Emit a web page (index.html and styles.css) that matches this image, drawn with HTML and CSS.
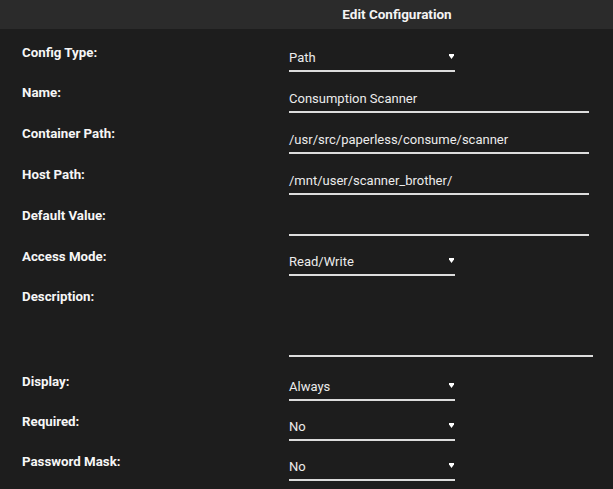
FILE: index.html
```html
<!DOCTYPE html>
<html lang="en">

<head>
    <meta charset="utf-8">
    <meta name="viewport" content="width=device-width, initial-scale=1.0">
    <title>Edit Configuration</title>
    <link rel="stylesheet" href="styles.css">
</head>

<body>
    <div class="titel">Edit Configuration</div>

    <div class="form">
        <div class="raekke valg">
            <div class="label">Config Type:</div>
            <div class="felt kort">Path<svg class="pil" width="5" height="5" viewBox="0 0 5 5"><polygon points="0,0 5,0 5,1.6 2.5,5 0,1.6" fill="#fff"/></svg></div>
        </div>
        <div class="raekke">
            <div class="label">Name:</div>
            <div class="felt lang">Consumption Scanner</div>
        </div>
        <div class="raekke">
            <div class="label">Container Path:</div>
            <div class="felt lang">/usr/src/paperless/consume/scanner</div>
        </div>
        <div class="raekke">
            <div class="label">Host Path:</div>
            <div class="felt lang">/mnt/user/scanner_brother/</div>
        </div>
        <div class="raekke">
            <div class="label">Default Value:</div>
            <div class="felt lang"></div>
        </div>
        <div class="raekke valg">
            <div class="label">Access Mode:</div>
            <div class="felt kort">Read/Write<svg class="pil" width="5" height="5" viewBox="0 0 5 5"><polygon points="0,0 5,0 5,1.6 2.5,5 0,1.6" fill="#fff"/></svg></div>
        </div>
        <div class="raekke beskrivelse">
            <div class="label">Description:</div>
            <div class="felt tekstfelt"></div>
        </div>
        <div class="raekke valg efter">
            <div class="label">Display:</div>
            <div class="felt kort">Always<svg class="pil" width="5" height="5" viewBox="0 0 5 5"><polygon points="0,0 5,0 5,1.6 2.5,5 0,1.6" fill="#fff"/></svg></div>
        </div>
        <div class="raekke valg">
            <div class="label">Required:</div>
            <div class="felt kort">No<svg class="pil" width="5" height="5" viewBox="0 0 5 5"><polygon points="0,0 5,0 5,1.6 2.5,5 0,1.6" fill="#fff"/></svg></div>
        </div>
        <div class="raekke valg">
            <div class="label">Password Mask:</div>
            <div class="felt kort">No<svg class="pil" width="5" height="5" viewBox="0 0 5 5"><polygon points="0,0 5,0 5,1.6 2.5,5 0,1.6" fill="#fff"/></svg></div>
        </div>
    </div>
</body>

</html>
```

FILE: styles.css
```css
body {
    margin: 0;
    background-color: #1d1d1d;
    color: #ececec;
    font-family: Roboto, "Liberation Sans", sans-serif;
    font-size: 13px;
}

.titel {
    height: 29px;
    line-height: 29px;
    background-color: #2b2b2b;
    padding-left: 181px;
    text-align: center;
    font-weight: bold;
    font-size: 13.5px;
    color: #f4f4f4;
}

.form {
    padding-top: 3px;
}

.raekke {
    display: flex;
    align-items: flex-end;
    height: 41px;
}

.valg {
    height: 40px;
}

.beskrivelse {
    height: 81px;
}

.efter {
    margin-top: 4px;
}

.label {
    box-sizing: border-box;
    flex: 0 0 289px;
    align-self: flex-start;
    padding-left: 22px;
    padding-top: 13px;
    line-height: 16px;
    font-weight: bold;
    font-size: 13.3px;
    color: #f6f6f6;
}

.felt {
    box-sizing: border-box;
    line-height: 16px;
    padding-bottom: 4px;
    border-bottom: 2px solid #dcdcdc;
    min-height: 22px;
}

.kort {
    width: 166px;
    display: flex;
    justify-content: space-between;
    align-items: center;
}

.lang {
    width: 300px;
}

.tekstfelt {
    width: 304px;
}

.pil {
    margin-bottom: 3px;
    margin-right: 1px;
}
```
